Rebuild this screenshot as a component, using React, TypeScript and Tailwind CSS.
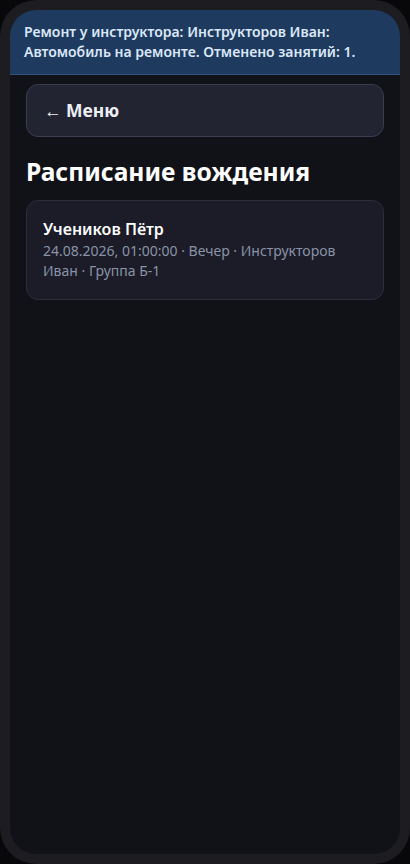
export default function App() {
  return (
    <div
      className="w-[410px] h-[864px] bg-[#08080a] flex"
      style={{ fontFamily: '"Noto Sans", "Open Sans", sans-serif' }}
    >
      {/* phone frame */}
      <div className="flex-1 flex rounded-[36px] bg-[#1c1c21] p-[10px]">
        <div className="flex-1 flex flex-col rounded-[26px] overflow-hidden bg-[#111217]">
          {/* notice banner */}
          <div className="bg-[#1e3a5f] border-b border-[#30537e] px-[14px] py-[12px]">
            <p className="text-[14px] leading-[20px] font-semibold text-[#dbe7f7]">
              Ремонт у инструктора: Инструкторов Иван: Автомобиль на ремонте. Отменено занятий: 1.
            </p>
          </div>

          <div className="flex flex-col px-4 pt-[9px]">
            <button className="flex items-center h-[53px] px-[17px] rounded-xl bg-[#232431] border border-[#3a3d52] text-left">
              <span className="text-[17.5px] font-bold text-[#eceef5]">← Меню</span>
            </button>

            <h1 className="mt-[19px] mb-[12px] text-[24.6px] leading-[32px] font-bold text-white">
              Расписание вождения
            </h1>

            {/* lesson card */}
            <div className="rounded-xl bg-[#1b1c27] border border-[#2c2e3c] px-4 pt-4 pb-[18px]">
              <div className="text-[16px] leading-[24px] font-semibold text-white">
                Учеников Пётр
              </div>
              <div className="text-[14px] leading-[20px] text-[#8a93a8]">
                24.08.2026, 01:00:00 · Вечер · Инструкторов Иван · Группа Б-1
              </div>
            </div>
          </div>
        </div>
      </div>
    </div>
  );
}
